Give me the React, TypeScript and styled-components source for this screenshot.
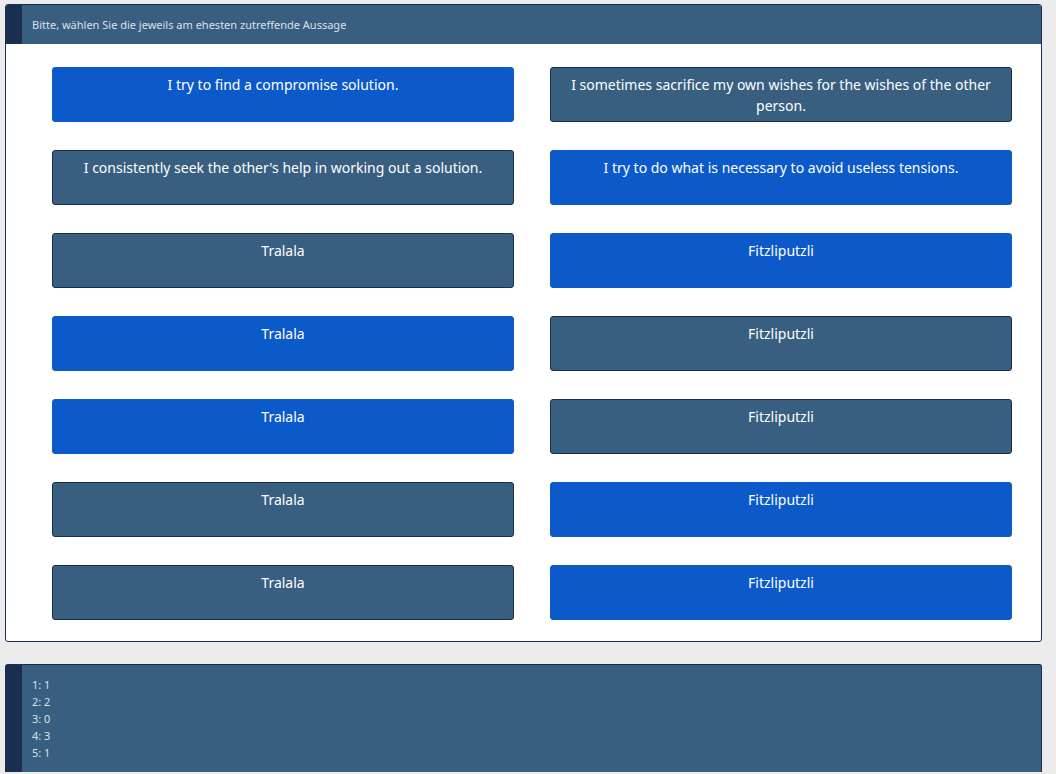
import React from "react";
import styled, { createGlobalStyle } from "styled-components";

const Global = createGlobalStyle`
  html, body { margin: 0; padding: 0; background: #ececec; }
  body { font-family: "Noto Sans", "Open Sans", sans-serif; }
`;

const Page = styled.div`
  padding: 4px 14px 0 5px;
  display: flex;
  flex-direction: column;
  gap: 22px;
`;

const Card = styled.section`
  background: #ffffff;
  border: 1px solid #1a2e4f;
  border-radius: 3px;
  overflow: hidden;
`;

const Header = styled.div`
  display: flex;
  align-items: center;
  height: 39px;
  background: #385e80;
  border-left: 16px solid #1a2e4f;
  padding-left: 10px;
  color: #d9e1ea;
  font-size: 11px;
`;

const Body = styled.div`
  padding: 10px 0 6px;
  display: flex;
  flex-direction: column;
`;

const Row = styled.div`
  display: flex;
  gap: 36px;
  padding: 13px 29px 15px 46px;
`;

const Choice = styled.button<{ $selected: boolean }>`
  flex: 1;
  height: 55px;
  box-sizing: border-box;
  display: flex;
  flex-direction: column;
  justify-content: flex-start;
  align-items: center;
  padding: 6px 12px 0;
  margin: 0;
  border-radius: 3px;
  border: 1px solid ${(p) => (p.$selected ? "#0c59ca" : "#1a2e4f")};
  background: ${(p) => (p.$selected ? "#0c59ca" : "#385e80")};
  color: #ffffff;
  font-family: "Noto Sans", "Open Sans", sans-serif;
  font-size: 14px;
  line-height: 21px;
  text-align: center;
  cursor: pointer;
`;

const Label = styled.span`
  display: block;
`;

const Result = styled.section`
  background: #385e80;
  border-top: 1px solid #1a2e4f;
  border-right: 1px solid #1a2e4f;
  border-radius: 3px 3px 0 0;
  border-left: 17px solid #1a2e4f;
  padding: 11px 10px 11px;
  color: #d9e1ea;
  font-size: 11px;
  line-height: 17px;
`;

const Line = styled.div``;

const rows: [string, boolean, string, boolean][] = [
  ["I try to find a compromise solution.", true, "I sometimes sacrifice my own wishes for the wishes of the other person.", false],
  ["I consistently seek the other's help in working out a solution.", false, "I try to do what is necessary to avoid useless tensions.", true],
  ["Tralala", false, "Fitzliputzli", true],
  ["Tralala", true, "Fitzliputzli", false],
  ["Tralala", true, "Fitzliputzli", false],
  ["Tralala", false, "Fitzliputzli", true],
  ["Tralala", false, "Fitzliputzli", true],
];

export default function App() {
  return (
    <>
      <Global />
      <Page>
        <Card>
          <Header>Bitte, wählen Sie die jeweils am ehesten zutreffende Aussage</Header>
          <Body>
            {rows.map(([a, sa, b, sb], i) => (
              <Row key={i}>
                <Choice $selected={sa}><Label>{a}</Label></Choice>
                <Choice $selected={sb}><Label>{b}</Label></Choice>
              </Row>
            ))}
          </Body>
        </Card>
        <Result>
          <Line>1: 1</Line>
          <Line>2: 2</Line>
          <Line>3: 0</Line>
          <Line>4: 3</Line>
          <Line>5: 1</Line>
        </Result>
      </Page>
    </>
  );
}
